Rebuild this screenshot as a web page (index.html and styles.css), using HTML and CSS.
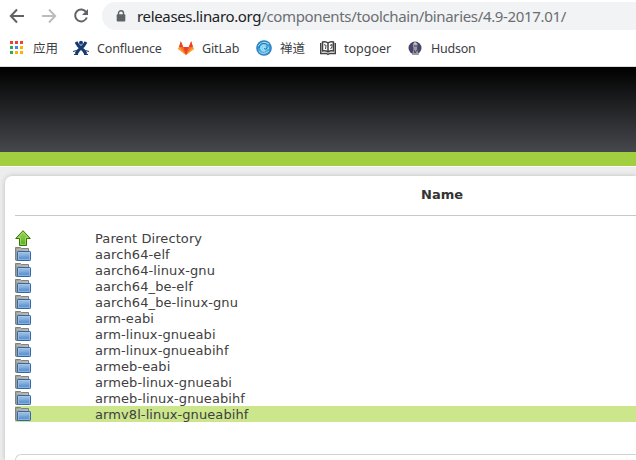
FILE: index.html
```html
<!DOCTYPE html>
<html lang="en">
<head>
<meta charset="utf-8">
<title>releases.linaro.org</title>
<link rel="stylesheet" href="styles.css">
</head>
<body>
<svg class="defs" aria-hidden="true">
  <defs>
    <linearGradient id="blue" x1="0" y1="0" x2="0" y2="1"><stop offset="0" stop-color="#a3c4e6"/><stop offset="1" stop-color="#5a92cf"/></linearGradient>
    <linearGradient id="gray" x1="0" y1="0" x2="1" y2="0"><stop offset="0" stop-color="#9a9a96"/><stop offset="1" stop-color="#c2c2be"/></linearGradient>
    <linearGradient id="green" x1="0" y1="0" x2="0" y2="1"><stop offset="0" stop-color="#9bd65b"/><stop offset="1" stop-color="#55b01c"/></linearGradient>
    <radialGradient id="orb"><stop offset="0" stop-color="#b8ecfb"/><stop offset=".55" stop-color="#4bafe0"/><stop offset="1" stop-color="#2478ba"/></radialGradient>
    <symbol id="folder" viewBox="0 0 16 16">
      <path d="M.5 14V1.5H5.5L6.5 2.5H13.5V6H3V14.5H1Z" fill="url(#gray)" stroke="#82827e"/>
      <path d="M1.5 3.5H12.5" fill="none" stroke="#b5b5b2"/>
      <rect x="2.5" y="5.5" width="13" height="9" rx=".7" fill="url(#blue)" stroke="#3465a4"/>
      <rect x="3.5" y="6.5" width="11" height="7" fill="none" stroke="#afcce9" stroke-opacity=".5"/>
      <path d="M4 10.5Q9 10.5 14 9V13H4Z" fill="#3f7fc5" opacity=".2"/>
    </symbol>
  </defs>
</svg>
<header class="browser">
  <div class="toolbar">
    <svg class="nav back" viewBox="0 0 16 16"><path d="M15 8H2M8 1.5 1.8 8 8 14.5"/></svg>
    <svg class="nav forward" viewBox="0 0 16 16"><path d="M1 8H14M8 1.5 14.2 8 8 14.5"/></svg>
    <svg class="nav reload" viewBox="0 0 16 16"><path d="M13.2 4.2A6 6 0 1 0 13.8 9.5"/><path class="tip" d="M15 1V7H9Z"/></svg>
    <div class="address">
      <svg class="lock" viewBox="0 0 10 12"><path d="M2.5 5V3.2a2.5 2.5 0 0 1 5 0V5" fill="none" stroke="#5f6368" stroke-width="1.4"/><rect x=".7" y="4.3" width="8.6" height="7.2" rx="1" fill="#5f6368"/></svg>
      <span class="url"><span class="host">releases.linaro.org</span>/components/toolchain/binaries/4.9-2017.01/</span>
    </div>
  </div>
  <nav class="bookmarks">
    <a class="mark apps"><svg viewBox="0 0 16 16"><path fill="#ea4335" d="M1 1h3v3H1zM6 1h3v3H6zM11 1h3v3h-3z"/><path fill="#34a853" d="M1 6h3v3H1zM1 11h3v3H1z"/><path fill="#4285f4" d="M6 6h3v3H6z"/><path fill="#fbb400" d="M11 6h3v3h-3zM6 11h3v3H6zM11 11h3v3h-3z"/></svg><span>应用</span></a>
    <a class="mark confluence"><svg viewBox="0 0 16 16"><path d="M3 2Q5 6 8 8T13 14M13 2Q11 6 8 8T3 14" fill="none" stroke="#163b70" stroke-width="3"/><circle cx="8" cy="2.8" r="2" fill="#163b70"/><path d="M0 11.5 3.5 10.5M16 11.5 12.5 10.5M1 14.5H5M15 14.5H11" fill="none" stroke="#163b70"/></svg><span>Confluence</span></a>
    <a class="mark gitlab"><svg viewBox="0 0 16 16"><path d="M.2 9 2.8 1.2 5.2 7H10.8L13.2 1.2 15.8 9 8 15Z" fill="#fc6d26"/><path d="M5.2 7H10.8L8 15Z" fill="#e24329"/><path d="M.2 9 1.5 6.8 8 15ZM15.8 9 14.5 6.8 8 15Z" fill="#fca326"/><path d="M2.8 1.2 5.2 7H1.2ZM13.2 1.2 14.8 7H10.8Z" fill="#e24329"/></svg><span>GitLab</span></a>
    <a class="mark zen"><svg viewBox="0 0 16 16"><circle cx="8" cy="8" r="7.8" fill="url(#orb)"/><path d="M2 6Q7 0 13 4M12.5 9Q12 4.500 8 5T5 9Q6 12 9 11M2.500 11Q7 16 13 11" fill="none" stroke="#d1f3ff" stroke-opacity=".75"/><path d="M3 8Q4 3 8 3.500T11 8Q10 10 8 8.500" fill="none" stroke="#167abd"/></svg><span>禅道</span></a>
    <a class="mark topgoer"><svg viewBox="0 0 16 16"><path d="M2.5 2Q6 1 8 3Q10 1 13.5 2V11Q10 10.5 8 12Q6 10.5 2.5 11ZM8 3V12" fill="#fff" stroke="#424242" stroke-width="1.5"/><path d="M.7 3V13.5H6.5L8 14.5 9.5 13.5H15.3V3" fill="none" stroke="#424242" stroke-width="1.4"/><path d="M4 4.5 6 5.5 5.5 9M10 5.5 12 4.5V7L10.5 9" fill="none" stroke="#555" stroke-width="1.1"/></svg><span>topgoer</span></a>
    <a class="mark hudson"><svg viewBox="0 0 16 16"><circle cx="8" cy="8" r="6.5" fill="#45456c"/><path d="M5 15 6.5 9 5.8 5 8 2 10.5 4 10 9 12 15Z" fill="#9997a2"/><path d="M6 4 8 2 10.5 4 9 5Z" fill="#cbc2bd"/><path d="m7 10 1 3 2-3M7 6h3" fill="none" stroke="#4b4658"/></svg><span>Hudson</span></a>
  </nav>
</header>
<div class="banner"></div>
<main class="page">
  <section class="card">
    <h1 class="heading">Name</h1>
    <ul class="listing">
      <li><svg viewBox="0 0 16 16"><path d="M8 .7 15.3 8.5H11.5V15.5H4.5V8.5H.7Z" fill="url(#green)" stroke="#3a7304"/><path d="M8 2.2 13 7.5H10.5V14.5H5.5V7.5H3Z" fill="none" stroke="#b5e782" stroke-opacity=".6"/></svg><a>Parent Directory</a></li>
      <li><svg><use href="#folder"/></svg><a>aarch64-elf</a></li>
      <li><svg><use href="#folder"/></svg><a>aarch64-linux-gnu</a></li>
      <li><svg><use href="#folder"/></svg><a>aarch64_be-elf</a></li>
      <li><svg><use href="#folder"/></svg><a>aarch64_be-linux-gnu</a></li>
      <li><svg><use href="#folder"/></svg><a>arm-eabi</a></li>
      <li><svg><use href="#folder"/></svg><a>arm-linux-gnueabi</a></li>
      <li><svg><use href="#folder"/></svg><a>arm-linux-gnueabihf</a></li>
      <li><svg><use href="#folder"/></svg><a>armeb-eabi</a></li>
      <li><svg><use href="#folder"/></svg><a>armeb-linux-gnueabi</a></li>
      <li><svg><use href="#folder"/></svg><a>armeb-linux-gnueabihf</a></li>
      <li class="selected"><svg><use href="#folder"/></svg><a>armv8l-linux-gnueabihf</a></li>
    </ul>
    <div class="panel"></div>
  </section>
</main>
</body>
</html>
```
FILE: styles.css
```css
* { box-sizing: border-box; }
body { margin: 0; height: 460px; overflow: hidden; background: #ededed; color: #404040; font: 13px/16px "DejaVu Sans", sans-serif; }
.defs { position: absolute; width: 0; height: 0; }
svg { display: block; flex: none; }
.browser { height: 67px; background: #fff; border-bottom: 1px solid #dadce0; font-family: "Noto Sans", "Noto Sans CJK SC", sans-serif; }
.toolbar { display: flex; align-items: center; height: 32px; padding-left: 9px; }
.nav { width: 16px; height: 16px; margin-right: 16px; fill: none; stroke: #5f6368; stroke-width: 2; }
.forward { stroke: #babcbe; }
.reload { margin-right: 13px; }
.reload .tip { fill: #5f6368; stroke: none; }
.address { display: flex; align-items: center; flex: 1; height: 28px; padding-left: 14px; border-radius: 14px 0 0 14px; background: #f1f3f4; }
.lock { width: 10px; height: 12px; margin-right: 11px; }
.url { color: #6b6e72; font-size: 15px; line-height: 28px; letter-spacing: -.345px; white-space: nowrap; }
.host { color: #202124; }
.bookmarks { display: flex; height: 34px; padding-left: 9px; }
.mark { display: flex; align-items: center; flex: none; height: 32px; color: #3c4043; font-size: 12.5px; white-space: nowrap; }
.mark svg { width: 16px; height: 16px; margin-right: 8px; }
.mark span { padding-top: 1px; }
.apps { width: 64px; }
.confluence { width: 105px; letter-spacing: -.15px; }
.gitlab { width: 78px; letter-spacing: -.15px; }
.zen { width: 64px; }
.topgoer { width: 87px; }
.hudson { letter-spacing: -.25px; }
.banner { height: 100px; background: linear-gradient(#000, #46484d); background-size: 100% 85px; border-bottom: 1px solid #fff; box-shadow: inset 0 -14px #a2cf40; }
.page { height: 293px; padding: 9px 0 0 5px; overflow: hidden; }
.card { height: 284px; padding-left: 10px; border-radius: 7px 0 0 0; background: #fff; box-shadow: 0 0 5px #bbb; }
.heading { display: flex; align-items: center; height: 40px; margin: 0 0 14px; padding: 0 0 2px 406px; border-bottom: 1px solid #c8c8c8; color: #333; font-size: 13px; }
.listing { margin: 0; padding: 0; list-style: none; }
.listing li { display: flex; height: 16px; }
.listing svg { width: 16px; height: 16px; margin-right: 64px; }
.listing a { padding-top: 1px; letter-spacing: .09px; white-space: nowrap; }
.listing .selected { background: #cce68c; }
.panel { height: 6px; margin-top: 32px; border: solid #d3d3d3; border-width: 1px 0 0 1px; border-radius: 8px 0 0 0; }
```
